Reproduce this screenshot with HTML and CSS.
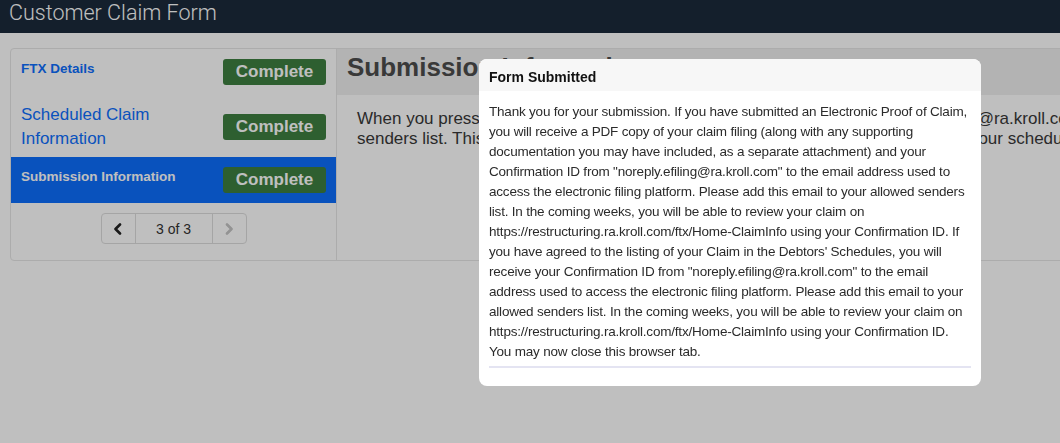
FILE: index.html
```html
<!DOCTYPE html>
<html lang="en">
<head>
<meta charset="utf-8">
<title>Customer Claim Form</title>
<link rel="stylesheet" href="styles.css">
</head>
<body>
<header class="topbar">
  <h1 class="topbar-title">Customer Claim Form</h1>
</header>
<main class="page">
  <div class="panel">
    <aside class="sidebar">
      <ul class="steps">
        <li class="step">
          <a class="step-link step-link--small" href="#">FTX Details</a>
          <span class="badge">Complete</span>
        </li>
        <li class="step step--tall">
          <a class="step-link step-link--large" href="#">Scheduled Claim Information</a>
          <span class="badge">Complete</span>
        </li>
        <li class="step step--active">
          <a class="step-link step-link--small" href="#">Submission Information</a>
          <span class="badge">Complete</span>
        </li>
      </ul>
      <nav class="pager">
        <span class="pager-btn pager-prev">
          <svg width="10" height="12" viewBox="0 0 10 12"><polyline points="7,1.5 2.5,6 7,10.5" fill="none" stroke="currentColor" stroke-width="2.6" stroke-linecap="round" stroke-linejoin="round"/></svg>
        </span>
        <span class="pager-count">3 of 3</span>
        <span class="pager-btn pager-next">
          <svg width="10" height="12" viewBox="0 0 10 12"><polyline points="3,1.5 7.5,6 3,10.5" fill="none" stroke="currentColor" stroke-width="2.6" stroke-linecap="round" stroke-linejoin="round"/></svg>
        </span>
      </nav>
    </aside>
    <section class="content">
      <h2 class="content-title">Submission Information</h2>
      <p class="content-text">When you press the "Submit" button, you will receive an email from "noreply.efiling@ra.kroll.com" to the email address you provided. Please add this email to your allowed senders list. This email contains your Confirmation ID, which you will need to see your scheduled claim.</p>
    </section>
  </div>
</main>
<div class="backdrop"></div>
<div class="modal" role="dialog">
  <div class="modal-header">
    <h3 class="modal-title">Form Submitted</h3>
  </div>
  <div class="modal-body">
    <p class="modal-text">Thank you for your submission. If you have submitted an Electronic Proof of Claim,<br>
you will receive a PDF copy of your claim filing (along with any supporting<br>
documentation you may have included, as a separate attachment) and your<br>
Confirmation ID from "noreply.efiling@ra.kroll.com" to the email address used to<br>
access the electronic filing platform. Please add this email to your allowed senders<br>
list. In the coming weeks, you will be able to review your claim on<br>
https://restructuring.ra.kroll.com/ftx/Home-ClaimInfo using your Confirmation ID. If<br>
you have agreed to the listing of your Claim in the Debtors' Schedules, you will<br>
receive your Confirmation ID from "noreply.efiling@ra.kroll.com" to the email<br>
address used to access the electronic filing platform. Please add this email to your<br>
allowed senders list. In the coming weeks, you will be able to review your claim on<br>
https://restructuring.ra.kroll.com/ftx/Home-ClaimInfo using your Confirmation ID.<br>
You may now close this browser tab.</p>
    <div class="modal-divider"></div>
  </div>
</div>
</body>
</html>
```
FILE: styles.css
```css
* { box-sizing: border-box; }

html, body {
  margin: 0;
  padding: 0;
  overflow: hidden;
}

body {
  font-family: "Liberation Sans", Arial, sans-serif;
  background: #ffffff;
  color: #333333;
  width: 1060px;
  height: 443px;
}

.topbar {
  height: 33px;
  background: #1b2a3b;
  padding: 0 9px;
}

.topbar-title {
  margin: 0;
  font-family: Roboto, "Liberation Sans", sans-serif;
  font-weight: 300;
  font-size: 21.5px;
  line-height: 26px;
  color: #ffffff;
}

.page {
  padding: 15px 0 0 10px;
}

.panel {
  display: flex;
  width: 1670px;
  border: 1px solid #e6e6e6;
  border-radius: 4px;
  background: #ffffff;
}

.sidebar {
  width: 326px;
  flex: none;
  border-right: 1px solid #e6e6e6;
  display: flex;
  flex-direction: column;
}

.steps {
  list-style: none;
  margin: 0;
  padding: 0;
}

.step {
  display: flex;
  align-items: flex-start;
  justify-content: space-between;
  gap: 10px;
  padding: 10px;
}

.step--tall {
  align-items: center;
  padding-top: 8px;
  padding-bottom: 6px;
}

.step--active {
  background: #0d6efd;
}

.step-link {
  flex: 1;
  color: #0d6efd;
  text-decoration: none;
}

.step-link--small {
  font-size: 13.5px;
  font-weight: bold;
  line-height: 19px;
}

.step-link--large {
  font-size: 17px;
  line-height: 24px;
}

.step--active .step-link {
  color: #ffffff;
}

.badge {
  flex: none;
  width: 103px;
  height: 26px;
  background: #3e7f40;
  color: #ffffff;
  border-radius: 3px;
  font-size: 17px;
  font-weight: bold;
  line-height: 26px;
  text-align: center;
}

.pager {
  display: flex;
  align-self: center;
  margin: 10px 0 16px;
  height: 31px;
  border: 1px solid #dddddd;
  border-radius: 4px;
}

.pager-btn {
  display: flex;
  align-items: center;
  justify-content: center;
  width: 34px;
}

.pager-prev {
  color: #222222;
  border-right: 1px solid #dddddd;
}

.pager-next {
  color: #c4c4c4;
  border-left: 1px solid #dddddd;
}

.pager-count {
  width: 76px;
  display: flex;
  align-items: center;
  justify-content: center;
  font-size: 14px;
  color: #333333;
}

.content {
  flex: 1;
}

.content-title {
  margin: 0;
  background: #efefef;
  padding: 3px 10px 13px;
  font-size: 26px;
  line-height: 30px;
  font-weight: bold;
  color: #4d4d4d;
}

.content-text {
  margin: 0;
  padding: 14px 20px 13px;
  font-size: 17px;
  line-height: 20px;
  color: #383838;
}

.backdrop {
  position: fixed;
  inset: 0;
  background: rgba(0, 0, 0, 0.25);
}

.modal {
  position: fixed;
  left: 479px;
  top: 59px;
  width: 502px;
  background: #ffffff;
  border-radius: 8px;
  overflow: hidden;
}

.modal-header {
  background: #f7f7f7;
  padding: 8px 10px 4px;
}

.modal-title {
  margin: 0;
  font-size: 14px;
  line-height: 20px;
  font-weight: bold;
  color: #111111;
}

.modal-body {
  padding: 11px 10px 18px;
}

.modal-text {
  margin: 0;
  font-size: 13.5px;
  letter-spacing: -0.2px;
  line-height: 20px;
  white-space: nowrap;
  color: #2b2b2b;
}

.modal-divider {
  margin-top: 4px;
  height: 2px;
  background: #e4e4f2;
}
```
